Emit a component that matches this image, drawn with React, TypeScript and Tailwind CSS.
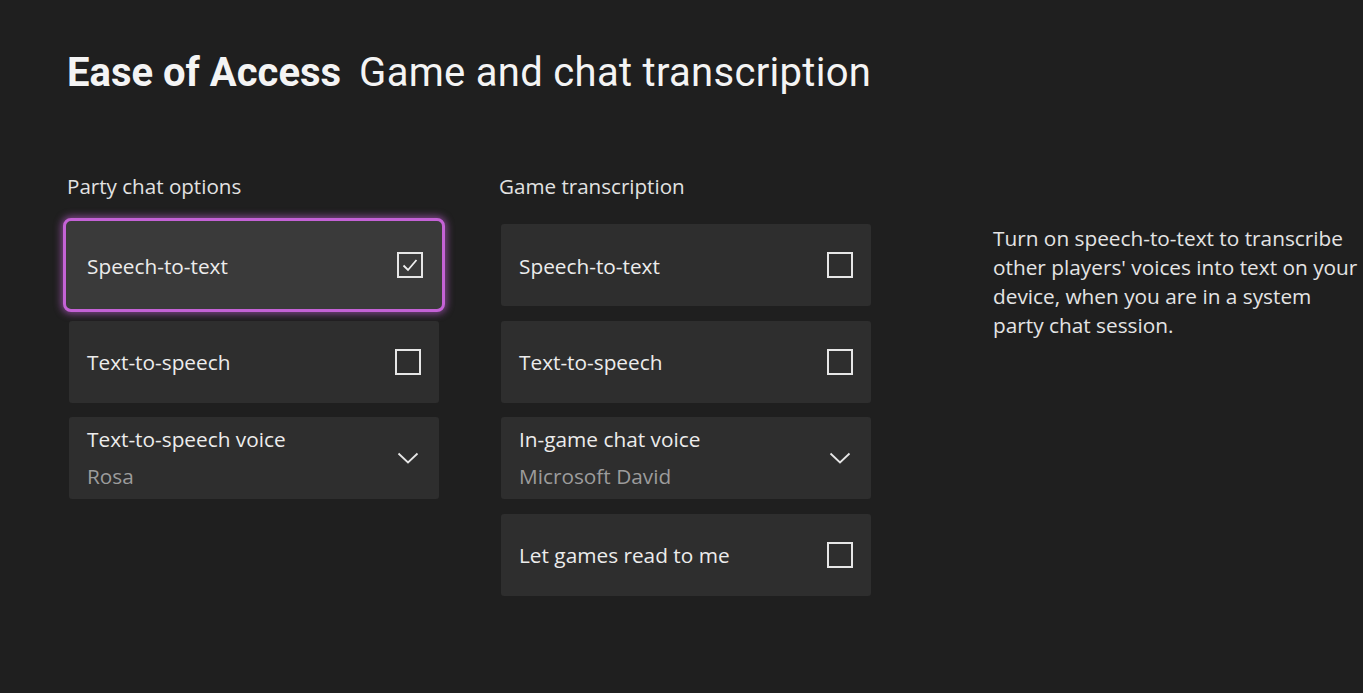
import React from "react";

type Item = {
  label: string;
  kind: "check" | "select";
  checked?: boolean;
  value?: string;
  focused?: boolean;
};

const party: Item[] = [
  { label: "Speech-to-text", kind: "check", checked: true, focused: true },
  { label: "Text-to-speech", kind: "check" },
  { label: "Text-to-speech voice", kind: "select", value: "Rosa" },
];

const game: Item[] = [
  { label: "Speech-to-text", kind: "check" },
  { label: "Text-to-speech", kind: "check" },
  { label: "In-game chat voice", kind: "select", value: "Microsoft David" },
  { label: "Let games read to me", kind: "check" },
];

const Checkbox = ({ checked }: { checked?: boolean }) => (
  <div className="w-[26px] h-[26px] border-2 border-[#e6e6e6] flex items-center justify-center">
    {checked && (
      <svg width="18" height="18" viewBox="0 0 18 18" fill="none">
        <path d="M2.5 9.5 L7 14 L15.5 4" stroke="#f0f0f0" strokeWidth="1.8" />
      </svg>
    )}
  </div>
);

const Chevron = () => (
  <svg width="22" height="12" viewBox="0 0 22 12" fill="none">
    <path d="M1.5 1.5 L11 10.5 L20.5 1.5" stroke="#e6e6e6" strokeWidth="1.8" />
  </svg>
);

const Card = ({ item }: { item: Item }) => {
  const inner =
    item.kind === "check" ? (
      <div className="flex items-center justify-between h-full pl-[18px] pr-[18px]">
        <span className="text-[20.8px] text-[#ececec] mt-[3px]">{item.label}</span>
        <Checkbox checked={item.checked} />
      </div>
    ) : (
      <div className="flex items-center justify-between h-full pl-[18px] pr-[20px]">
        <div className="flex flex-col leading-[37px]">
          <span className="text-[20.8px] text-[#ececec]">{item.label}</span>
          <span className="text-[20.8px] text-[#9c9c9c]">{item.value}</span>
        </div>
        <Chevron />
      </div>
    );

  if (item.focused) {
    return (
      <div className="h-[82px] w-[370px]">
        <div className="-m-[6px] h-[94px] w-[382px] rounded-[8px] border-[3px] border-[#c462d6] bg-[#3a3a3a] shadow-[0_0_7px_2px_rgba(200,100,220,0.55)]">
          <div className="h-full pl-[3px] pr-[1px]">{inner}</div>
        </div>
      </div>
    );
  }
  return (
    <div className="h-[82px] w-[370px] rounded-[3px] bg-[#2e2e2e]">{inner}</div>
  );
};

const Column = ({ title, items }: { title: string; items: Item[] }) => (
  <div className="flex flex-col">
    <div className="text-[20.6px] text-[#e2e2e2] h-[24px] leading-[24px] -ml-[2px]">{title}</div>
    <div className="flex flex-col gap-[14.5px] mt-[26px]">
      {items.map((it, i) => (
        <Card key={i} item={it} />
      ))}
    </div>
  </div>
);

export default function App() {
  return (
    <div
      className="w-[1363px] h-[693px] bg-[#1f1f1f] overflow-hidden text-white"
      style={{ fontFamily: '"Open Sans", "Noto Sans", sans-serif' }}
    >
      <div className="pl-[67px] pt-[50px]">
        <h1
          className="flex items-baseline gap-[18px] text-[40px] leading-[46px] text-[#f4f4f4]"
          style={{ fontFamily: "Roboto, sans-serif" }}
        >
          <span className="font-bold">Ease of Access</span>
          <span className="font-normal tracking-[0.3px]">Game and chat transcription</span>
        </h1>
      </div>
      <div className="flex pl-[69px] pt-[78px]">
        <Column title="Party chat options" items={party} />
        <div className="ml-[62px]">
          <Column title="Game transcription" items={game} />
        </div>
        <p className="ml-[122px] mt-[50px] w-[372px] text-[20.8px] leading-[29px] text-[#e4e4e4]">
          Turn on speech-to-text to transcribe other players' voices into text on your device,
          when you are in a system party chat session.
        </p>
      </div>
    </div>
  );
}
